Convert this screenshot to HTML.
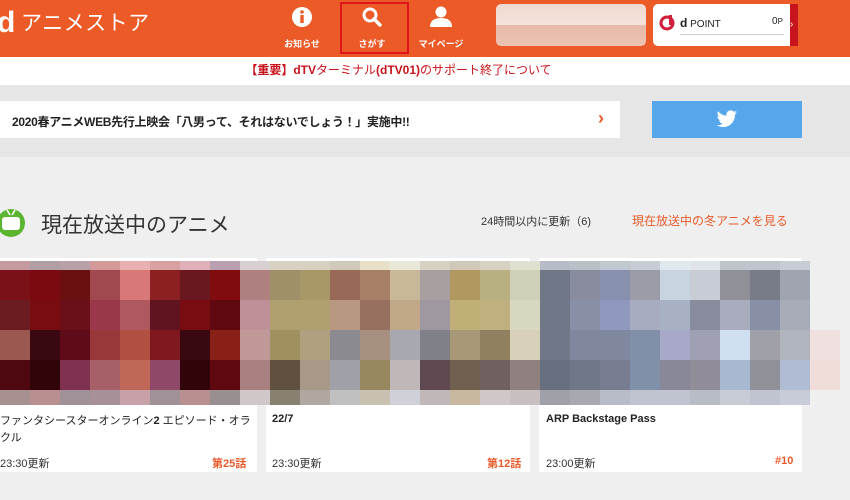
<!DOCTYPE html>
<html><head><meta charset="utf-8"><style>
*{margin:0;padding:0;box-sizing:border-box}
body{width:850px;height:500px;overflow:hidden;background:#efefef;font-family:"Liberation Sans","Noto Sans CJK JP",sans-serif;position:relative}
.a{position:absolute}
.hdr{left:0;top:0;width:850px;height:57px;background:#ec5a28}
.nav{color:#fff;font-size:9px;font-weight:bold;text-align:center;width:70px}
.g{display:grid;grid-template-columns:repeat(27,30px);grid-template-rows:9px 30px 30px 30px 30px 15px;left:0;top:261px}
.card{background:#fff;top:258px;height:214px;border-radius:2px}
.t{font-size:11px;color:#222}
.tm{font-size:11px;color:#333}
.ep{font-size:11px;color:#e85a2a;font-weight:bold}
</style></head><body>
<div class="a hdr"></div>
<div class="a" style="left:-3px;top:5px;color:#fff;font-size:30px;font-weight:bold;line-height:36px">d</div>
<div class="a" style="left:21px;top:9px;color:#fff;font-size:21px;line-height:30px;letter-spacing:0.5px">アニメストア</div>
<div class="a" style="left:340px;top:2px;width:69px;height:52px;border:2px solid #e0141c"></div>
<svg class="a" style="left:291px;top:6px" width="22" height="22" viewBox="0 0 22 22"><circle cx="11" cy="11" r="10" fill="#fff"/><circle cx="11" cy="6" r="1.8" fill="#ec5a28"/><rect x="9.3" y="9" width="3.4" height="8" fill="#ec5a28"/></svg>
<svg class="a" style="left:361px;top:6px" width="22" height="22" viewBox="0 0 22 22"><circle cx="9" cy="9" r="6" fill="none" stroke="#fff" stroke-width="3"/><line x1="13" y1="13" x2="19" y2="19" stroke="#fff" stroke-width="3.5" stroke-linecap="round"/></svg>
<svg class="a" style="left:429px;top:5px" width="24" height="24" viewBox="0 0 24 24"><circle cx="12" cy="7" r="5.5" fill="#fff"/><path d="M1 22 Q1 13 12 13 Q23 13 23 22Z" fill="#fff"/></svg>
<div class="a nav" style="left:267px;top:37px">お知らせ</div>
<div class="a nav" style="left:337px;top:37px">さがす</div>
<div class="a nav" style="left:406px;top:37px">マイページ</div>
<div class="a" style="left:496px;top:4px;width:150px;height:42px;border-radius:5px;background:linear-gradient(180deg,#f0d8d0 0,#f4e4dc 50%,#e8b8a8 50%,#ecc4b4 100%)"></div>
<div class="a" style="left:653px;top:4px;width:145px;height:42px;background:#fff;border-radius:5px"></div>
<div class="a" style="left:790px;top:4px;width:8px;height:42px;background:#c8141c;color:#fff;font-size:10px;line-height:42px">›</div>
<svg class="a" style="left:659px;top:15px" width="16" height="16" viewBox="0 0 16 16"><circle cx="8" cy="8" r="6" fill="none" stroke="#d01e3c" stroke-width="3"/><rect x="10" y="0" width="3" height="10" fill="#d01e3c"/></svg>
<div class="a" style="left:680px;top:16px;font-size:10px;color:#222"><b style="font-size:12px">d</b> POINT</div>
<div class="a" style="left:772px;top:16px;font-size:10px;color:#222">0<span style="font-size:8px">P</span></div>
<div class="a" style="left:680px;top:34px;width:104px;height:1px;background:#ccc"></div>
<div class="a" style="left:0;top:57px;width:850px;height:28px;background:#fff"></div>
<div class="a" style="left:0;top:61px;width:797px;text-align:center;font-size:12px;color:#c8141c;font-weight:bold">【重要】dTV<span style="font-weight:normal">ターミナル</span>(dTV01)<span style="font-weight:normal">のサポート終了について</span></div>
<div class="a" style="left:0;top:85px;width:850px;height:72px;background:#e6e6e6"></div>
<div class="a" style="left:0;top:101px;width:620px;height:37px;background:#fff"></div>
<div class="a" style="left:12px;top:113px;font-size:12px;color:#222;font-weight:bold;letter-spacing:-0.3px">2020春アニメWEB先行上映会「八男って、それはないでしょう！」実施中!!</div>
<div class="a" style="left:598px;top:108px;font-size:18px;color:#e85a2a;font-weight:bold">›</div>
<div class="a" style="left:652px;top:101px;width:150px;height:37px;background:#55a6eb"></div>
<svg class="a" style="left:716px;top:110px" width="22" height="19" viewBox="0 0 24 20"><path d="M23 2.3c-.8.4-1.7.6-2.6.7.9-.6 1.6-1.4 2-2.5-.9.5-1.9.9-2.9 1.1A4.6 4.6 0 0 0 11.6 5.8 13 13 0 0 1 2.2 1 4.6 4.6 0 0 0 3.6 7.1c-.7 0-1.4-.2-2.1-.6 0 2.2 1.6 4.1 3.7 4.5-.7.2-1.4.2-2.1.1.6 1.8 2.3 3.2 4.3 3.2A9.2 9.2 0 0 1 .6 16.2 13 13 0 0 0 7.6 18.3c8.5 0 13.1-7 13.1-13.1v-.6c.9-.6 1.7-1.4 2.3-2.3z" fill="#fff"/></svg>
<svg class="a" style="left:-3px;top:206px" width="30" height="32" viewBox="0 0 30 32"><circle cx="14" cy="17" r="14" fill="#5cb531"/><rect x="5" y="11" width="18" height="13" rx="3" fill="#fff"/><line x1="10" y1="4" x2="13" y2="9" stroke="#fff" stroke-width="1.5"/><line x1="18" y1="4" x2="15" y2="9" stroke="#fff" stroke-width="1.5"/></svg>
<div class="a" style="left:41px;top:209px;font-size:21px;color:#333">現在放送中のアニメ</div>
<div class="a" style="left:481px;top:213px;font-size:11px;color:#333">24時間以内に更新（6)</div>
<div class="a" style="left:632px;top:212px;font-size:12px;color:#e85a2a">現在放送中の冬アニメを見る</div>
<div class="a card" style="left:0;width:257px"></div>
<div class="a card" style="left:266px;width:264px"></div>
<div class="a card" style="left:539px;width:263px"></div>
<div class="a g">
<div style="background:#c49aa0"></div><div style="background:#b0a0a5"></div><div style="background:#b8a0a8"></div><div style="background:#d49a9a"></div><div style="background:#e8b0b0"></div><div style="background:#d8a0a0"></div><div style="background:#e0b0b8"></div><div style="background:#b8a0b0"></div><div style="background:#d8d0d0"></div>
<div style="background:#d8d0c0"></div><div style="background:#d8d0c0"></div><div style="background:#d0c8b8"></div><div style="background:#e8e0c8"></div><div style="background:#e8e8d8"></div><div style="background:#d8d0c0"></div><div style="background:#d0c8b8"></div><div style="background:#d8d0c0"></div><div style="background:#e0e0d0"></div>
<div style="background:#b8bcc8"></div><div style="background:#b8c0c8"></div><div style="background:#c0c8d0"></div><div style="background:#c8ccd4"></div><div style="background:#e0e8f0"></div><div style="background:#e0e4e8"></div><div style="background:#c0c4cc"></div><div style="background:#c0c4cc"></div><div style="background:#c8ccd4"></div>

<div style="background:#7a1018"></div><div style="background:#7a0a10"></div><div style="background:#6a1010"></div><div style="background:#a04a50"></div><div style="background:#d87878"></div><div style="background:#8a2020"></div><div style="background:#6a1820"></div><div style="background:#800c10"></div><div style="background:#b08080"></div>
<div style="background:#a09068"></div><div style="background:#a89868"></div><div style="background:#986858"></div><div style="background:#a88068"></div><div style="background:#c8b898"></div><div style="background:#a8a0a0"></div><div style="background:#b09860"></div><div style="background:#b8b080"></div><div style="background:#d0d0b8"></div>
<div style="background:#707888"></div><div style="background:#888c9c"></div><div style="background:#8890b0"></div><div style="background:#9c9ca8"></div><div style="background:#c8d4e0"></div><div style="background:#c8ccd4"></div><div style="background:#909098"></div><div style="background:#787c88"></div><div style="background:#a0a4b0"></div>

<div style="background:#6a1c20"></div><div style="background:#780c10"></div><div style="background:#6a1018"></div><div style="background:#983848"></div><div style="background:#b05860"></div><div style="background:#601420"></div><div style="background:#780c10"></div><div style="background:#600810"></div><div style="background:#c09098"></div>
<div style="background:#b0a070"></div><div style="background:#b0a070"></div><div style="background:#b89880"></div><div style="background:#987060"></div><div style="background:#c0a888"></div><div style="background:#a098a0"></div><div style="background:#c0b078"></div><div style="background:#c0b080"></div><div style="background:#d8d8c0"></div>
<div style="background:#707888"></div><div style="background:#8890a8"></div><div style="background:#9098c0"></div><div style="background:#a8acc0"></div><div style="background:#a8b0c4"></div><div style="background:#888c9c"></div><div style="background:#a8acbc"></div><div style="background:#8890a8"></div><div style="background:#a8acb8"></div>

<div style="background:#9a5850"></div><div style="background:#3a0810"></div><div style="background:#600c18"></div><div style="background:#983838"></div><div style="background:#b05040"></div><div style="background:#801820"></div><div style="background:#3a0810"></div><div style="background:#882018"></div><div style="background:#c09898"></div>
<div style="background:#a09060"></div><div style="background:#b0a080"></div><div style="background:#8a8a90"></div><div style="background:#a89080"></div><div style="background:#a8a8b0"></div><div style="background:#808088"></div><div style="background:#a89878"></div><div style="background:#908060"></div><div style="background:#d8d0b8"></div>
<div style="background:#707888"></div><div style="background:#8088a0"></div><div style="background:#8088a0"></div><div style="background:#8090a8"></div><div style="background:#a8a8c8"></div><div style="background:#a0a0b4"></div><div style="background:#d0e0f0"></div><div style="background:#a0a0a8"></div><div style="background:#b0b4bc"></div>

<div style="background:#500810"></div><div style="background:#300408"></div><div style="background:#803050"></div><div style="background:#a86068"></div><div style="background:#c06858"></div><div style="background:#904868"></div><div style="background:#300408"></div><div style="background:#600810"></div><div style="background:#a88080"></div>
<div style="background:#605040"></div><div style="background:#a89888"></div><div style="background:#a0a0a8"></div><div style="background:#988860"></div><div style="background:#c0b8b8"></div><div style="background:#604850"></div><div style="background:#706050"></div><div style="background:#706060"></div><div style="background:#908080"></div>
<div style="background:#687080"></div><div style="background:#707888"></div><div style="background:#787c90"></div><div style="background:#8090a8"></div><div style="background:#888898"></div><div style="background:#908c98"></div><div style="background:#a8b8d0"></div><div style="background:#909098"></div><div style="background:#b0bcd4"></div>

<div style="background:#a89090"></div><div style="background:#b89090"></div><div style="background:#a09098"></div><div style="background:#a89098"></div><div style="background:#c8a0a8"></div><div style="background:#a09098"></div><div style="background:#b89090"></div><div style="background:#989090"></div><div style="background:#d0c8c8"></div>
<div style="background:#888070"></div><div style="background:#b0a8a0"></div><div style="background:#c0c0c0"></div><div style="background:#c8c0b0"></div><div style="background:#d0d0d8"></div><div style="background:#c0b8b8"></div><div style="background:#c8b8a0"></div><div style="background:#d0c8c8"></div><div style="background:#c8c0c0"></div>
<div style="background:#a0a0a8"></div><div style="background:#a8a8b0"></div><div style="background:#b8bcc8"></div><div style="background:#c0c4d0"></div><div style="background:#c0c4d0"></div><div style="background:#b8bcc4"></div><div style="background:#c8ccd4"></div><div style="background:#c0c4d0"></div><div style="background:#c8ccd8"></div>
</div>
<div class="a" style="left:810px;top:330px;width:30px;height:30px;background:#f0e0e0"></div>
<div class="a" style="left:810px;top:360px;width:30px;height:30px;background:#f0dcd8"></div>
<div class="a t" style="left:0;top:413px;width:252px;line-height:17px">ファンタシースターオンライン<b>2</b> エピソード・オラクル</div>
<div class="a t" style="left:272px;top:413px;font-weight:bold">22/7</div>
<div class="a t" style="left:546px;top:413px;font-weight:bold">ARP Backstage Pass</div>
<div class="a tm" style="left:0;top:455px">23:30更新</div>
<div class="a tm" style="left:272px;top:455px">23:30更新</div>
<div class="a tm" style="left:546px;top:455px">23:00更新</div>
<div class="a ep" style="left:212px;top:455px">第25話</div>
<div class="a ep" style="left:487px;top:455px">第12話</div>
<div class="a ep" style="left:775px;top:455px">#10</div>
</body></html>
